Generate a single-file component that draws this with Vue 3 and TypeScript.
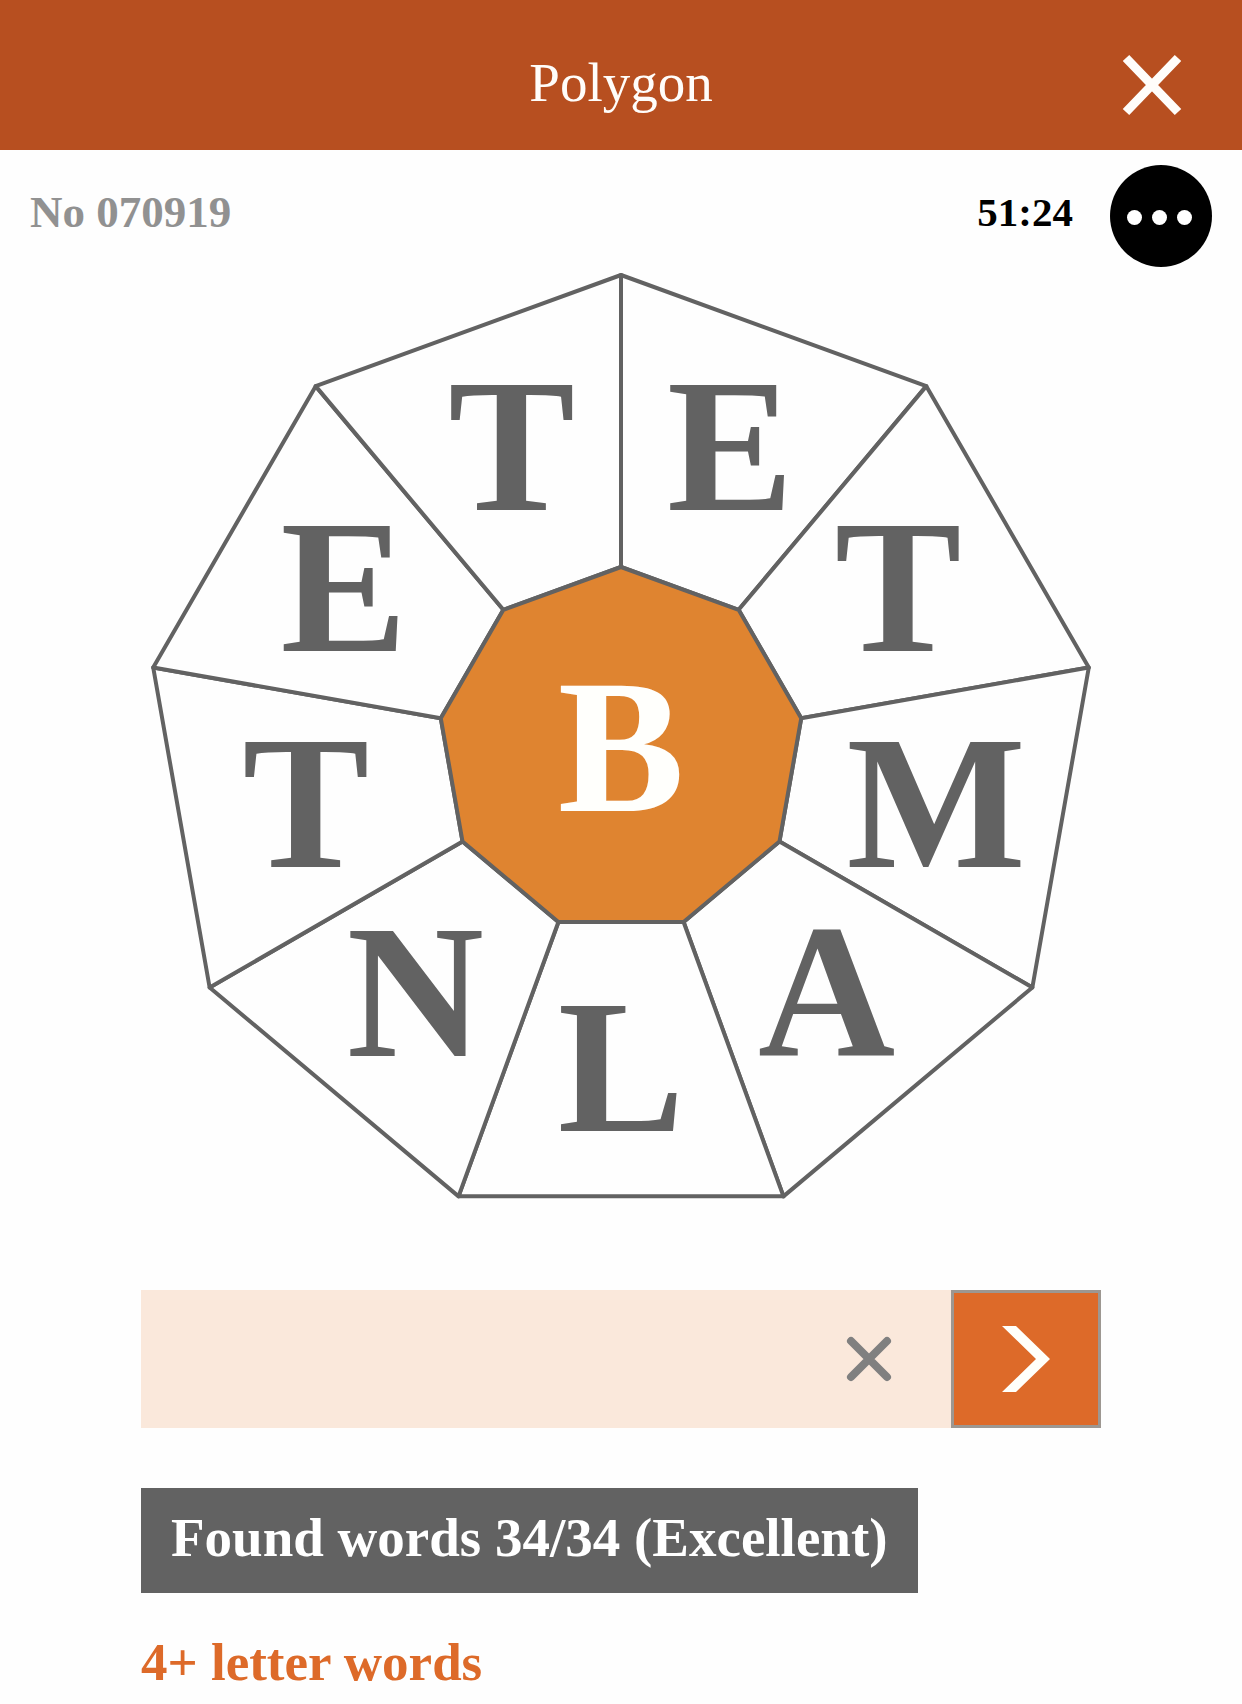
<script setup lang="ts">
import { ref } from 'vue'

interface Point {
  x: number
  y: number
}

interface Tile {
  letter: string
  path: string
  label: Point
}

const CENTRE: Point = { x: 480, y: 483 }
const OUTER_RADIUS = 475
const INNER_RADIUS = 183
const LABEL_RADIUS = 320
const BASELINE_SHIFT = 61

const centreLetter = 'B'
const letters = ['E', 'T', 'M', 'A', 'L', 'N', 'T', 'E', 'T']
const step = 360 / letters.length

// Angles run clockwise from twelve o'clock.
function polar(radius: number, degrees: number): Point {
  const a = (degrees * Math.PI) / 180
  return {
    x: CENTRE.x + radius * Math.sin(a),
    y: CENTRE.y - radius * Math.cos(a),
  }
}

const join = (points: Point[]): string => points.map((p) => `${p.x},${p.y}`).join(' ')

const tiles: Tile[] = letters.map((letter, i) => ({
  letter,
  path: join([
    polar(INNER_RADIUS, i * step),
    polar(OUTER_RADIUS, i * step),
    polar(OUTER_RADIUS, (i + 1) * step),
    polar(INNER_RADIUS, (i + 1) * step),
  ]),
  label: polar(LABEL_RADIUS, (i + 0.5) * step),
}))

const corePath = join(letters.map((_, i) => polar(INNER_RADIUS, i * step)))

const word = ref('')
const found = ref(34)
const total = 34

function add(letter: string): void {
  word.value += letter
}

function clear(): void {
  word.value = ''
}
</script>

<template>
  <div class="page">
    <header class="header">
      <h1 class="title">Polygon</h1>
      <button class="close" type="button" aria-label="Close">
        <svg width="60" height="62" viewBox="0 0 60 62" aria-hidden="true">
          <path d="M4 4 L56 58 M56 4 L4 58" fill="none" stroke="#fffdfa" stroke-width="9" />
        </svg>
      </button>
    </header>

    <div class="status">
      <span class="number">No 070919</span>
      <span class="timer">51:24</span>
      <button class="more" type="button" aria-label="More options">
        <svg width="102" height="102" viewBox="0 0 102 102" aria-hidden="true">
          <circle cx="51" cy="51" r="51" fill="#000" />
          <g fill="#fff">
            <circle cx="24.5" cy="52.5" r="7.5" />
            <circle cx="49.5" cy="52.5" r="7.5" />
            <circle cx="74.5" cy="52.5" r="7.5" />
          </g>
        </svg>
      </button>
    </div>

    <main class="main">
      <svg class="board" viewBox="0 0 960 935" role="group" aria-label="Letters">
        <g v-for="(tile, i) in tiles" :key="i" class="tile" @click="add(tile.letter)">
          <polygon :points="tile.path" />
          <text :x="tile.label.x" :y="tile.label.y + BASELINE_SHIFT">{{ tile.letter }}</text>
        </g>
        <g class="tile core" @click="add(centreLetter)">
          <polygon :points="corePath" />
          <text :x="CENTRE.x" :y="CENTRE.y + BASELINE_SHIFT">{{ centreLetter }}</text>
        </g>
      </svg>

      <form class="entry" @submit.prevent="clear">
        <div class="field">
          <input v-model="word" class="word" type="text" aria-label="Your word" autocomplete="off" />
          <button class="clear" type="button" aria-label="Clear" @click="clear">
            <svg width="46" height="46" viewBox="0 0 46 46" aria-hidden="true">
              <path
                d="M5 5 L41 41 M41 5 L5 41"
                fill="none"
                stroke="#808080"
                stroke-width="8"
                stroke-linecap="round"
              />
            </svg>
          </button>
        </div>
        <button class="submit" type="submit" aria-label="Submit word">
          <svg width="48" height="66" viewBox="0 0 48 66" aria-hidden="true">
            <path d="M0 0 H14 L48 33 L14 66 H0 L34 33 Z" fill="#fffffa" />
          </svg>
        </button>
      </form>

      <p class="found">Found words {{ found }}/{{ total }} (Excellent)</p>
      <h2 class="group">4+ letter words</h2>
    </main>
  </div>
</template>

<style>
body {
  margin: 0;
  background: #fefefe;
}
</style>

<style scoped>
.page {
  font-family: 'Liberation Serif', 'Times New Roman', serif;
  color: #000;
}

button {
  display: flex;
  align-items: center;
  justify-content: center;
  padding: 0;
  border: 0;
  background: none;
  cursor: pointer;
}

.header {
  display: grid;
  grid-template-columns: 1fr auto 1fr;
  align-items: center;
  height: 150px;
  padding: 19px 60px 0;
  box-sizing: border-box;
  background: #b74f20;
}

.title {
  grid-column: 2;
  margin: 0;
  padding-bottom: 4px;
  font-size: 55px;
  line-height: 64px;
  font-weight: 400;
  color: #fffdfa;
}

.close {
  justify-self: end;
}

.status {
  display: flex;
  align-items: center;
  padding: 15px 30px 0;
}

.number,
.timer {
  padding-bottom: 8px;
  line-height: 64px;
  font-weight: 700;
}

.number {
  margin-right: auto;
  font-size: 45px;
  color: #919191;
}

.timer {
  margin-right: 37px;
  font-size: 41px;
}

.main {
  padding: 0 141px 10px;
}

.board {
  display: block;
  width: 100%;
}

.tile {
  cursor: pointer;
}

.tile polygon {
  fill: #fefefe;
  stroke: #626262;
  stroke-width: 4;
  stroke-linejoin: round;
}

.tile text {
  font-size: 190px;
  font-weight: 700;
  text-anchor: middle;
  fill: #626262;
}

.core polygon {
  fill: #df8430;
}

.core text {
  fill: #fffffc;
}

.entry {
  display: flex;
  height: 138px;
  margin-top: 88px;
}

.field {
  display: flex;
  flex: 1;
  min-width: 0;
  padding-right: 59px;
  background: #fae8db;
}

.word {
  flex: 1;
  min-width: 0;
  padding: 0 30px;
  border: 0;
  outline: 0;
  background: transparent;
  font: inherit;
  font-size: 55px;
  font-weight: 700;
  color: #626262;
}

.submit {
  width: 150px;
  box-sizing: border-box;
  border: 3px solid #9d9791;
  background: #dd6a29;
}

.found {
  width: fit-content;
  margin: 60px 0 0;
  padding: 18px 30px 23px;
  background: #626262;
  font-size: 55px;
  line-height: 64px;
  font-weight: 700;
  color: #fff;
}

.group {
  margin: 37px 0 0;
  font-size: 53px;
  line-height: 64px;
  font-weight: 700;
  color: #dd6a29;
}
</style>
